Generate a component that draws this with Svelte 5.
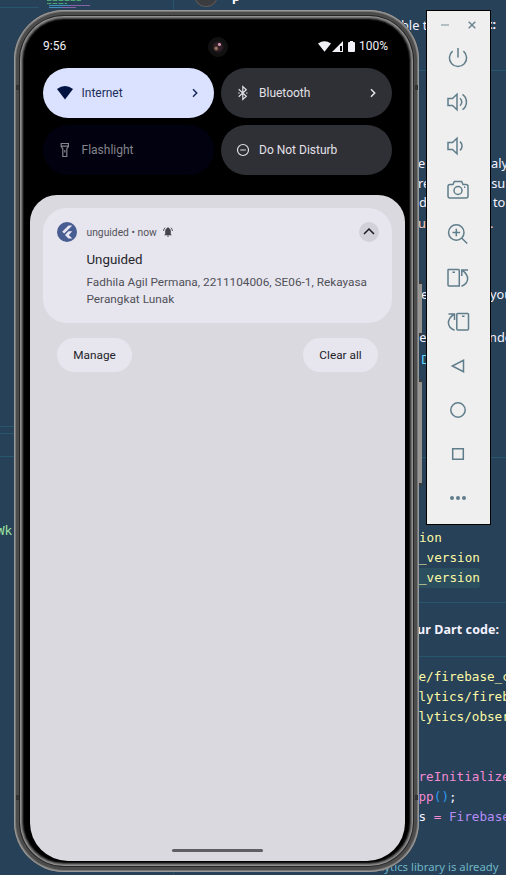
<script>
  // Fragments of the editor window that remain visible around the emulator.
  const fragments = [
    { x: 232, y: -3, t: 'p', c: '#fff', k: 'bold' },
    { x: 401, y: 25, t: 'ble t', c: '#f4f2ff' },
    { x: 487, y: 25, t: 't:', c: '#f4f2ff', k: 'bold' },
    { x: 418, y: 163, t: 'e [', c: '#f4f2ff' },
    { x: 491, y: 163, t: 'aly', c: '#f4f2ff' },
    { x: 418, y: 183, t: 're', c: '#f4f2ff' },
    { x: 485, y: 183, t: 'ssu', c: '#f4f2ff' },
    { x: 419, y: 202, t: 'd', c: '#f4f2ff' },
    { x: 493, y: 202, t: 'to', c: '#f4f2ff' },
    { x: 418, y: 223, t: 'u', c: '#ffd0b8' },
    { x: 490, y: 223, t: '.', c: '#ffd0d0' },
    { x: 421, y: 294, t: 'e', c: '#f4f2ff' },
    { x: 490, y: 294, t: 'you', c: '#f4f2ff' },
    { x: 413, y: 337, t: 'se', c: '#f4f2ff' },
    { x: 489, y: 337, t: 'nde', c: '#f4f2ff' },
    { x: 421, y: 359, t: 'D', c: '#5fd7ff' },
    { x: 419, y: 538, t: 'ion', c: '#fdf9a4', k: 'mono' },
    { x: 419, y: 558, t: '_version', c: '#fdf9a4', k: 'mono' },
    { x: 419, y: 578, t: '_version', c: '#fdf9a4', k: 'mono' },
    { x: 409, y: 630, t: 'our Dart code:', c: '#f4f2ff', k: 'bold' },
    { x: 418.5, y: 677, t: 'e/firebase_c', c: '#fdf9a4', k: 'mono' },
    { x: 418.5, y: 697, t: 'lytics/fireb', c: '#fdf9a4', k: 'mono' },
    { x: 418.5, y: 717, t: 'lytics/obser', c: '#fdf9a4', k: 'mono' },
    { x: 418.5, y: 777, t: 'reInitialize', c: '#f48ad4', k: 'mono' },
    { x: 418.5, y: 797, t: 'pp', c: '#f48ad4', k: 'mono' },
    { x: 433.8, y: 797, t: '()', c: '#2f9df4', k: 'mono' },
    { x: 449, y: 797, t: ';', c: '#f4f2ff', k: 'mono' },
    { x: 418.5, y: 817, t: 's', c: '#f4f2ff', k: 'mono' },
    { x: 433.8, y: 817, t: '=', c: '#f48ad4', k: 'mono' },
    { x: 449, y: 817, t: 'Firebase', c: '#b68cf5', k: 'mono' },
    { x: 375, y: 867, t: 'elytics library is already', c: '#6fb5c6', k: 'small' },
    { x: -3, y: 531, t: 'Wk:', c: '#9be3a0', k: 'mono' },
  ];
  const rules = [
    { x: 0, y: 7, w: 39 },
    { x: 418, y: 70, w: 88 }, { x: 0, y: 426, w: 20 },
    { x: 0, y: 433, w: 20 }, { x: 0, y: 456, w: 20 }, { x: 418, y: 457, w: 88 },
    { x: 418, y: 602, w: 88 }, { x: 418, y: 656, w: 88 },
  ];
  const tools = [
    'M5.6 4.1A8.6 8.6 0 1 0 16.4 4.1M11 1v9.5',
    'M1 7.5h4.5L10 3.2v15.6L5.5 14.5H1zM13 7.2a5 5 0 0 1 0 7.6M15.500 3.300a9.500 9.500 0 0 1 0 15.400',
    'M1 7.5h4.5L10 3.2v15.6L5.5 14.5H1zM13 6.7a5.5 5.5 0 0 1 0 8.6',
    'M3 5.500h3l1.300-3h7.400l1.300 3H19q2 0 2 2V17q0 2-2 2H3q-2 0-2-2V7.500q0-2 2-2zM15 11.500a4 4 0 1 1-8 0 4 4 0 1 1 8 0M17 8.200h1.300',
    'M17 9.500a7.700 7.700 0 1 1-15.400 0 7.700 7.700 0 1 1 15.400 0M14.600 15l5.600 5.500M9.300 5.700v7.600M5.500 9.500h7.600',
    'M1.500 2.500h10q.8 0 .8.800V19H2q-1 0-1-1V3q0-.5.5-.5zM5.500 5.300h2.500M14.500 19.300C22.500 16 22.500 8.500 15.500 3.300M14.800 9V3H21',
    'M10.500 2.500H20.700q.8 0 .8.800V18q0 1-1 1H10.700q-.9 0-.9-1V3.300q0-.8.700-.8zM15 5.300h2.500M7.500 19.300C-.5 16-.5 8.500 6.800 3.300M7.500 9V3H1.500',
    'M16.500 5.300v11.400L5.300 11z',
    'M18.200 11a7.200 7.200 0 1 1-14.400 0 7.200 7.200 0 1 1 14.400 0',
    'M5.700 5.700h10.600v10.600H5.700z',
    'dots',
  ];
</script>

<main>
  <div class="gutter"></div>
  {#each rules as r}
    <i class="rule" style="left:{r.x}px;top:{r.y}px;width:{r.w}px"></i>
  {/each}
  <div class="minimap"><i></i><i></i><i></i><i></i><i></i></div>
  <div class="avatar"></div>
  <div class="highlight"></div>
  {#each fragments as f}
    <span class="frag {f.k ?? ''}" style="left:{f.x}px;top:{f.y - 10}px;color:{f.c}">{f.t}</span>
  {/each}

  <i class="sidekey power"></i>
  <i class="sidekey volume"></i>
  <section class="phone">
    <i class="seam s1"></i><i class="seam s2"></i><i class="seam s3"></i><i class="seam s4"></i>
    <i class="camera"></i>
    <header>
      <span>9:56</span>
      <div class="status">
        <svg class="wifi" viewBox="0 0 24 19" width="13" height="11"><path d="M0 4Q12-4 24 4L12 19z" /></svg>
        <svg width="11" height="11" viewBox="0 0 11 11"><path fill-rule="evenodd" d="M0 11L11 0v11zM8 5v5h2V5z" /></svg>
        <svg class="batt" width="7" height="11" viewBox="0 0 7 11"><path d="M2 0h3v1h1q1 0 1 1v8q0 1-1 1H1q-1 0-1-1V2q0-1 1-1h1z" /></svg>
        <span>100%</span>
      </div>
    </header>
    <div class="tiles">
      <div class="tile on">
        <svg width="18" height="16" viewBox="0 0 18 16"><path d="M1 4Q9-2 17 4L9 14.500z" fill="#00123f" /></svg>
        <span>Internet</span>
        <svg class="chev" width="8" height="10" viewBox="0 0 8 10"><path d="M2 1.300L5.700 5 2 8.700" /></svg>
      </div>
      <div class="tile">
        <svg width="18" height="18" viewBox="0 0 18 18"><path class="line" d="M4.700 5.300l7.600 7-3.500 3.200v-13l3.500 3.200-7.600 7M4.200 9h1.500M12 9h1.500" /></svg>
        <span>Bluetooth</span>
        <svg class="chev" width="8" height="10" viewBox="0 0 8 10"><path d="M2 1.300L5.700 5 2 8.700" /></svg>
      </div>
      <div class="tile off">
        <svg width="18" height="18" viewBox="0 0 18 18"><path class="line" d="M5.200 2.500h7.200v3l-1.600 2.200v7.800h-4V7.700L5.200 5.500zM5.200 5.100h7.200M8.800 9v2.500" /></svg>
        <span>Flashlight</span>
      </div>
      <div class="tile">
        <svg width="18" height="18" viewBox="0 0 18 18"><circle class="line" cx="9" cy="9" r="5.500" /><path class="line" d="M6.200 9h5.600" /></svg>
        <span>Do Not Disturb</span>
      </div>
    </div>
    <div class="shade">
      <article>
        <div class="logo">
          <svg width="20" height="20" viewBox="0 0 20 20"><path d="M11.500 3.500h3.800L7.200 11.600 5.200 9.700zM11.500 9.300h3.800L11.800 12.900l3.500 3.500h-3.800L8 12.900z" fill="#e8e6f2" /></svg>
        </div>
        <div class="body">
          <div class="meta">
            unguided • now
            <svg width="10" height="10" viewBox="0 0 10 10"><path d="M5 .2q.8 0 .8.900Q7.800 1.800 7.800 4v3l.9.900v.4h-7.400v-.4l.9-.9V4q0-2.200 2-2.900Q4.200.2 5 .2zM4 8.800h2Q6 9.800 5 9.800T4 8.800z" fill="#44454c" /><path d="M2 .7Q.6 2 .6 4M8 .7Q9.400 2 9.400 4" fill="none" stroke="#44454c" stroke-width=".9" /></svg>
          </div>
          <h1>Unguided</h1>
          <p>Fadhila Agil Permana, 2211104006, SE06-1, Rekayasa Perangkat Lunak</p>
        </div>
        <div class="collapse"><svg width="20" height="20" viewBox="0 0 20 20"><path d="M5 12l5-5 5 5" fill="none" stroke="#1b1b20" stroke-width="1.500" /></svg></div>
      </article>
      <div class="actions"><button>Manage</button><button>Clear all</button></div>
      <i class="home"></i>
    </div>
  </section>

  <aside>
    <div class="winbar">
      <svg width="10" height="10" viewBox="0 0 10 10"><path d="M1 5h8" stroke="#a2b4bb" stroke-width="1.600" /></svg>
      <svg width="10" height="10" viewBox="0 0 10 10"><path d="M1.700 1.700l6.600 6.600M8.300 1.700L1.700 8.300" stroke="#6b858f" stroke-width="1.500" /></svg>
    </div>
    {#each tools as d}
      <div class="tool">
        <svg width="22" height="22" viewBox="0 0 22 22">
          {#if d === 'dots'}
            <circle cx="5" cy="11" r="2" /><circle cx="11" cy="11" r="2" /><circle cx="17" cy="11" r="2" />
          {:else}
            <path {d} />
          {/if}
        </svg>
      </div>
    {/each}
  </aside>
</main>

<style>
  :global(body) { margin: 0; }
  main {
    position: relative; width: 506px; height: 875px; overflow: hidden;
    background: #264158; font-family: Roboto, sans-serif;
  }
  .gutter { position: absolute; left: 173px; top: 0; width: 1px; height: 875px; background: #28546c; }
  .rule { position: absolute; height: 1px; background: #28576d; }
  .minimap { position: absolute; left: 47px; top: 0; width: 48px; display: flex; flex-direction: column; gap: 1px; opacity: .75; }
  .minimap i { height: 1px; width: 34px; background: repeating-linear-gradient(90deg, #58c878 0 4px, #386f68 4px 6px); }
  .minimap i:nth-child(2) { display: none; }
  .minimap i:nth-child(3) { width: 20px; margin-top: 1px; }
  .minimap i:nth-child(4) { width: 41px; margin-left: 2px; background: linear-gradient(90deg, #4aa9dc 50%, #a86fc0 50%); }
  .minimap i:nth-child(5) { width: 27px; margin-left: 2px; background: linear-gradient(90deg, #4aa9dc 50%, #a86fc0 50%); }
  .avatar { position: absolute; left: 194px; top: -17px; width: 24px; height: 24px; border-radius: 50%; background: #3b3c40; box-shadow: inset 0 0 0 1px #5d5a5a; }
  .highlight { position: absolute; left: 410px; top: 568px; width: 70px; height: 20px; border-radius: 3px; background: #2c4f60; }
  .frag { position: absolute; line-height: 20px; white-space: pre; font-family: "Noto Sans", sans-serif; font-size: 12.800px; }
  .frag.bold { font-weight: 700; font-size: 12.5px; letter-spacing: .1px; }
  .frag.mono { font-family: "DejaVu Sans Mono", monospace; font-size: 12.65px; }
  .frag.small { font-size: 11.350px; }

  .sidekey { position: absolute; left: 415px; width: 7px; background: #96938f; border-top: 3px solid #3a3a3a; border-bottom: 3px solid #3a3a3a; box-sizing: border-box; border-radius: 0 2px 2px 0; }
  .power { top: 281px; height: 55px; }
  .volume { top: 379px; height: 107px; }

  .phone {
    position: absolute; left: 14px; top: 10px; width: 405px; height: 862px; box-sizing: border-box;
    padding: 14px 14px 11px 16px; border-radius: 50px; background: #000; overflow: hidden;
    display: flex; flex-direction: column;
    box-shadow: inset 0 0 0 1px #999, inset 0 0 0 2px #777, inset 0 0 0 5px #4c4c4c,
      inset 0 0 0 6px #262626, inset 0 0 0 7px #8f8f8f, inset 0 0 0 8px #707070, inset 0 0 0 9px #454545, inset 0 0 0 10px #171717;
  }
  .seam { position: absolute; width: 3px; height: 5px; background: #333; }
  .s1 { left: 2px; top: 75px; }
  .s2 { right: 1px; top: 75px; }
  .s3 { left: 2px; top: 785px; }
  .s4 { right: 1px; top: 785px; }
  .camera {
    position: absolute; left: 194px; top: 27px; width: 20px; height: 20px; border-radius: 50%;
    border: 1px solid #131313; box-sizing: border-box;
    background: radial-gradient(circle at 58% 36%, #d898b8 0 1px, transparent 2px), radial-gradient(circle at 40% 58%, #987060 0 1px, transparent 2.500px), radial-gradient(circle, #302025 0 4px, #111 6px);
  }
  header { height: 44px; padding: 0 17px 0 13px; display: flex; justify-content: space-between; align-items: center; color: #f2f0f7; font-size: 12px; box-sizing: border-box; }
  .status { display: flex; align-items: center; }
  .status svg { fill: #f2f0f7; }
  .wifi { margin-right: 1px; }
  .batt { margin: 0 4px 0 5px; }
  .tiles { display: grid; grid-template-columns: 171px 171px; gap: 7px 6.500px; padding-left: 13px; margin-bottom: 20px; }
  .tile { height: 50px; border-radius: 25px; background: #2f3036; color: #e2e0e8; display: flex; align-items: center; padding: 0 15px 0 13px; box-sizing: border-box; font-size: 12px; }
  .tile span { flex: 1; margin-left: 7.500px; }
  .on { background: #dae2ff; color: #1b2c5c; }
  .off { background: #01010f; color: #85858c; }
  .line { fill: none; stroke: currentColor; stroke-width: 1.200; }
  .chev { fill: none; stroke: currentColor; stroke-width: 1.500; }
  .shade { flex: 1; width: 375px; box-sizing: border-box; border-radius: 27px 27px 38px 38px; background: #dad9df; padding: 13px; position: relative; }
  article { height: 115px; border-radius: 24px; background: #e7e6ef; display: flex; padding: 14px 13px 0 14px; box-sizing: border-box; }
  .logo { width: 20px; height: 20px; border-radius: 50%; background: #485d92; flex: none; }
  .body { flex: 1; min-width: 0; margin-left: 9.500px; }
  .meta { display: flex; align-items: center; gap: 6px; height: 20px; font-size: 10.300px; color: #53535a; }
  h1 { margin: 8px 0 4px; font-size: 13.300px; line-height: 20px; font-weight: 400; color: #25252a; }
  p { margin: 0 -20px 0 0; font-size: 11.800px; line-height: 17px; color: #505057; }
  .collapse { width: 20px; height: 20px; border-radius: 50%; background: #d2d1da; flex: none; }
  .actions { display: flex; justify-content: space-between; padding: 15px 14px 0; }
  button { border: 0; height: 34px; width: 75px; padding: 0; border-radius: 17px; background: #e7e6ef; color: #222227; font: 11.800px Roboto, sans-serif; }
  .home { position: absolute; left: 142px; bottom: 9px; width: 91px; height: 3px; border-radius: 2px; background: #5e5e63; }

  aside { position: absolute; left: 426px; top: 10px; width: 65px; height: 515px; box-sizing: border-box; border: 1px solid #000; background: #efefef; display: flex; flex-direction: column; }
  .winbar { height: 25px; display: flex; gap: 17px; padding: 9px 0 0 13px; box-sizing: border-box; }
  .winbar svg { flex: none; }
  .tool { height: 44px; display: flex; align-items: center; justify-content: center; padding-right: 1px; flex: none; }
  .tool svg { fill: none; stroke: #607d8b; stroke-width: 1.500; overflow: visible; }
  .tool circle { fill: #607d8b; stroke: none; }
</style>
